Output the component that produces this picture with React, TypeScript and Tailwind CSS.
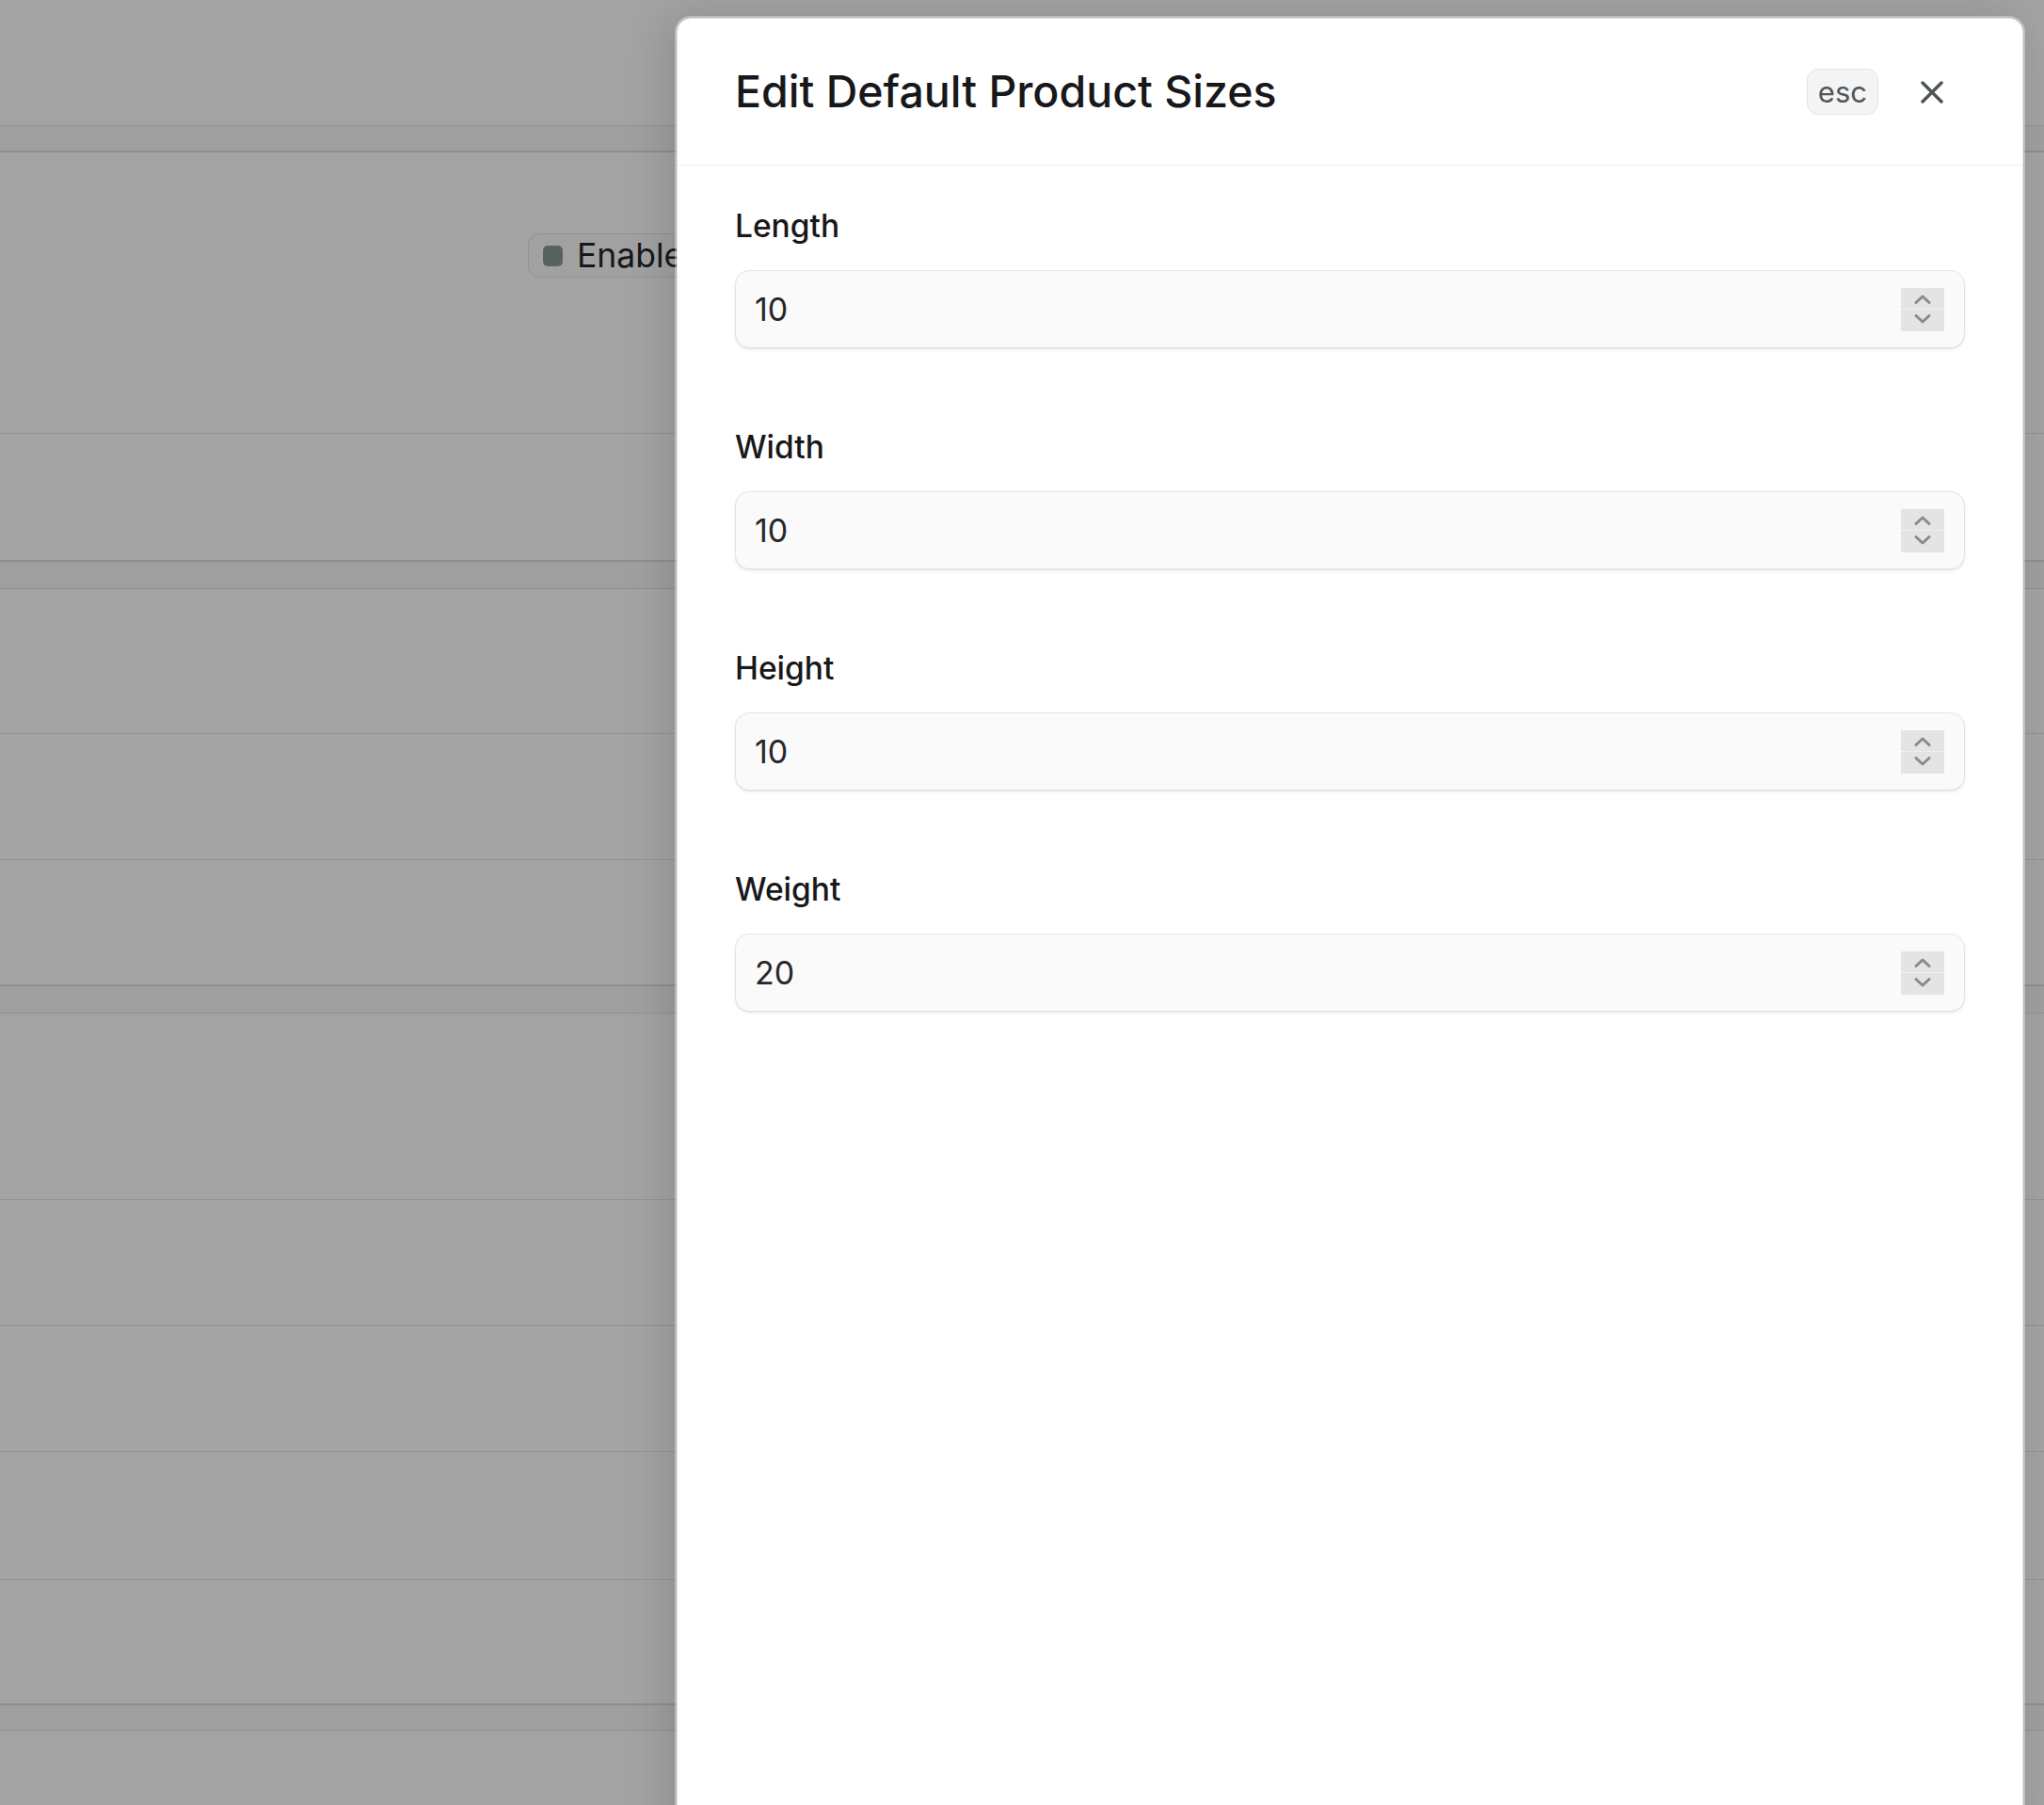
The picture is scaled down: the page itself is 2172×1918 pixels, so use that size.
// Background page rows (behind the dimmed overlay)
const ROWS = [
  { key: 'top', cls: 'h-[134px] border-b border-[#e7e7e9]' },
  { key: 'band1', cls: 'h-[28px] bg-[#f9f9fa] border-b-2 border-[#dedee0]' },
  { key: 'status', cls: 'h-[299px] border-b border-[#e7e7e9]', badge: true },
  { key: 'r2', cls: 'h-[136px] border-b-2 border-[#dedee0]' },
  { key: 'band2', cls: 'h-[29px] bg-[#f9f9fa] border-b border-[#e2e2e4]' },
  { key: 'r3', cls: 'h-[154px] border-b border-[#e7e7e9]' },
  { key: 'r4', cls: 'h-[134px] border-b border-[#e7e7e9]' },
  { key: 'r5', cls: 'h-[134px] border-b-2 border-[#dedee0]' },
  { key: 'band3', cls: 'h-[29px] bg-[#f9f9fa] border-b border-[#e2e2e4]' },
  { key: 'r6', cls: 'h-[198px] border-b border-[#e7e7e9]' },
  { key: 'r7', cls: 'h-[134px] border-b border-[#e7e7e9]' },
  { key: 'r8', cls: 'h-[134px] border-b border-[#e7e7e9]' },
  { key: 'r9', cls: 'h-[136px] border-b border-[#e7e7e9]' },
  { key: 'r10', cls: 'h-[133px] border-b-2 border-[#dedee0]' },
  { key: 'band4', cls: 'h-[27px] bg-[#f9f9fa] border-b border-[#e2e2e4]' },
  { key: 'r11', cls: 'h-[120px]' },
]

const FIELDS = [
  { label: 'Length', value: '10' },
  { label: 'Width', value: '10' },
  { label: 'Height', value: '10' },
  { label: 'Weight', value: '20' },
]

function Chevron({ up }: { up?: boolean }) {
  return (
    <svg width="18" height="10" viewBox="0 0 18 10" fill="none">
      <path
        d={up ? 'M2 8.5L9 2L16 8.5' : 'M2 1.5L9 8L16 1.5'}
        stroke="#8a8a8a"
        strokeWidth="3"
        strokeLinecap="round"
        strokeLinejoin="round"
      />
    </svg>
  )
}

function NumberField({ label, value }: { label: string; value: string }) {
  return (
    <div className="flex flex-col gap-[24px]">
      <label className="text-[33.5px] leading-[45px] font-medium text-[#18181b]">{label}</label>
      <div className="flex h-[83px] items-center rounded-[15px] border border-[#e4e4e7] bg-[#fafafa] pl-[20px] pr-[21px] shadow-[0_1px_0_rgba(0,0,0,0.05),0_2px_4px_rgba(0,0,0,0.06)]">
        <input
          readOnly
          value={value}
          className="min-w-0 flex-1 bg-transparent text-[34px] text-[#27272a] outline-none"
        />
        {/* native-looking spinner */}
        <div className="flex h-[46px] w-[46px] flex-col bg-[#e4e4e4]">
          <div className="flex flex-1 items-center justify-center pt-[2px]">
            <Chevron up />
          </div>
          <div className="flex flex-1 items-center justify-center border-t border-dashed border-[#f6f6f6] pb-[2px]">
            <Chevron />
          </div>
        </div>
      </div>
    </div>
  )
}

export default function App() {
  return (
    <div className="relative h-[1918px] w-full overflow-hidden bg-white font-['Inter','Liberation_Sans',sans-serif]">
      {/* ── Page behind the drawer ─────────────────────────────────────── */}
      <div className="flex flex-col">
        {ROWS.map((row) => (
          <div key={row.key} className={row.cls}>
            {row.badge && (
              <div className="pl-[561px] pt-[86px]">
                <div className="inline-flex h-[47px] items-center gap-[15px] rounded-[12px] border border-[#e4e4e7] bg-[#fcfcfc] pl-[15px] pr-[20px]">
                  <span className="h-[22px] w-[21px] rounded-[5px] bg-[#889c97]" />
                  <span className="text-[35.5px] text-[#27272a]">Enabled</span>
                </div>
              </div>
            )}
          </div>
        ))}
      </div>

      {/* ── Overlay ───────────────────────────────────────────────────── */}
      <div className="absolute inset-0 bg-black/[0.36]" />

      {/* ── Drawer ────────────────────────────────────────────────────── */}
      <div className="absolute left-[719px] top-[19px] flex h-[1940px] w-[1431px] flex-col rounded-t-[15px] border border-[#e4e4e7] bg-white shadow-[0_0_0_2px_rgba(255,255,255,0.35),-8px_0_48px_rgba(0,0,0,0.14)]">
        {/* Header */}
        <div className="flex h-[156px] shrink-0 items-center justify-between border-b border-[#ececee] pl-[61px] pr-[61px]">
          <h2 className="text-[46.5px] font-[450] leading-none text-[#18181b]">
            Edit Default Product Sizes
          </h2>
          <div className="flex items-center gap-[22px]">
            <kbd className="flex h-[49px] items-center rounded-[12px] border border-[#e4e4e7] bg-[#f4f4f5] px-[11px] font-['Inter','Liberation_Sans',sans-serif] text-[31px] leading-none text-[#52575a]">
              esc
            </kbd>
            <button className="flex h-[70px] w-[70px] items-center justify-center">
              <svg width="24" height="24" viewBox="0 0 24 24" fill="none">
                <path
                  d="M2 2L22 22M22 2L2 22"
                  stroke="#4e5553"
                  strokeWidth="3.5"
                  strokeLinecap="round"
                />
              </svg>
            </button>
          </div>
        </div>

        {/* Body */}
        <div className="flex flex-col gap-[83px] px-[61px] pt-[42px]">
          {FIELDS.map((f) => (
            <NumberField key={f.label} label={f.label} value={f.value} />
          ))}
        </div>
      </div>
    </div>
  )
}
